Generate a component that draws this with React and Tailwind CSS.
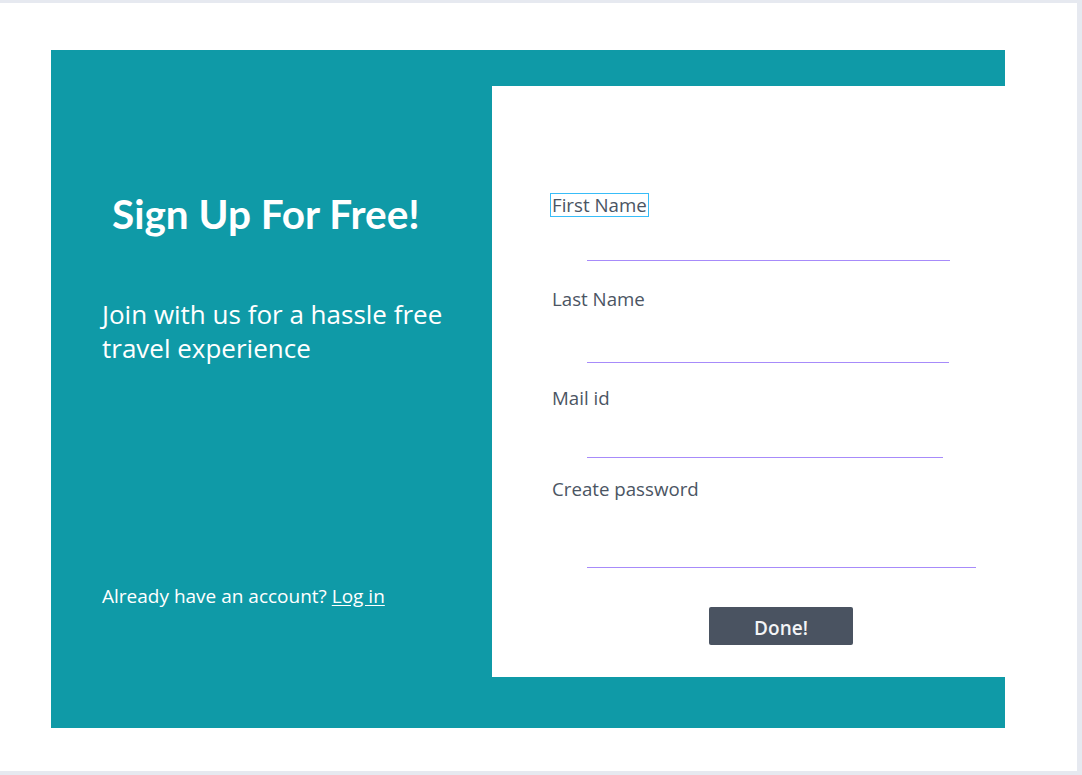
export default function App() {
  const fields = [
    { label: 'First Name', labelMt: 'mt-0', inputH: 'h-[45px]', inputW: 'w-[363px]', focus: true },
    { label: 'Last Name', labelMt: 'mt-[27px]', inputH: 'h-[53px]', inputW: 'w-[362px]' },
    { label: 'Mail id', labelMt: 'mt-[24px]', inputH: 'h-[49px]', inputW: 'w-[356px]' },
    { label: 'Create password', labelMt: 'mt-[20px]', inputH: 'h-[68px]', inputW: 'w-[389px]', type: 'password' },
  ];

  return (
    <div className="min-h-[775px] bg-[#e6e9f0] pt-[3px]" style={{ fontFamily: '"Open Sans", sans-serif' }}>
      <div className="w-[1077px] h-[768px] bg-white pt-[47px] pl-[51px]">
        {/* ── Teal card ── */}
        <div className="w-[954px] h-[678px] bg-[#0f9aa7] flex">
          {/* Left side */}
          <div className="w-[441px] flex flex-col pl-[51px]">
            <h1
              className="mt-[141px] ml-[10px] text-[40.5px] leading-[46px] font-bold text-white"
              style={{ fontFamily: 'Lato, sans-serif' }}
            >
              Sign Up For Free!
            </h1>
            <p className="mt-[60px] text-[26px] leading-[34px] text-white">
              Join with us for a hassle free travel experience
            </p>
            <p className="mt-[218px] text-[19px] leading-[26px] text-white">
              Already have an account? <a href="#" className="underline underline-offset-2">Log in</a>
            </p>
          </div>

          {/* Right form panel */}
          <div className="mt-[36px] w-[513px] h-[591px] bg-white pl-[60px] pt-[108px]">
            {fields.map(f => (
              <div key={f.label}>
                <label
                  className={`${f.labelMt} block w-fit text-[18.7px] leading-[22px] text-[#4b5563] ${f.focus ? 'outline outline-1 outline-[#38bdf8] -ml-px px-px' : ''}`}
                >
                  {f.label}
                </label>
                <input
                  type={f.type || 'text'}
                  className={`block ml-[35px] ${f.inputW} ${f.inputH} border-b border-[#a78bfa] bg-transparent outline-none`}
                />
              </div>
            ))}
            <button className="block mt-[39px] ml-[157px] w-[144px] h-[38px] pt-[4px] rounded-[2px] bg-[#4a5361] text-[19px] font-semibold text-[#f3f4f6]">
              Done!
            </button>
          </div>
        </div>
      </div>
    </div>
  );
}
